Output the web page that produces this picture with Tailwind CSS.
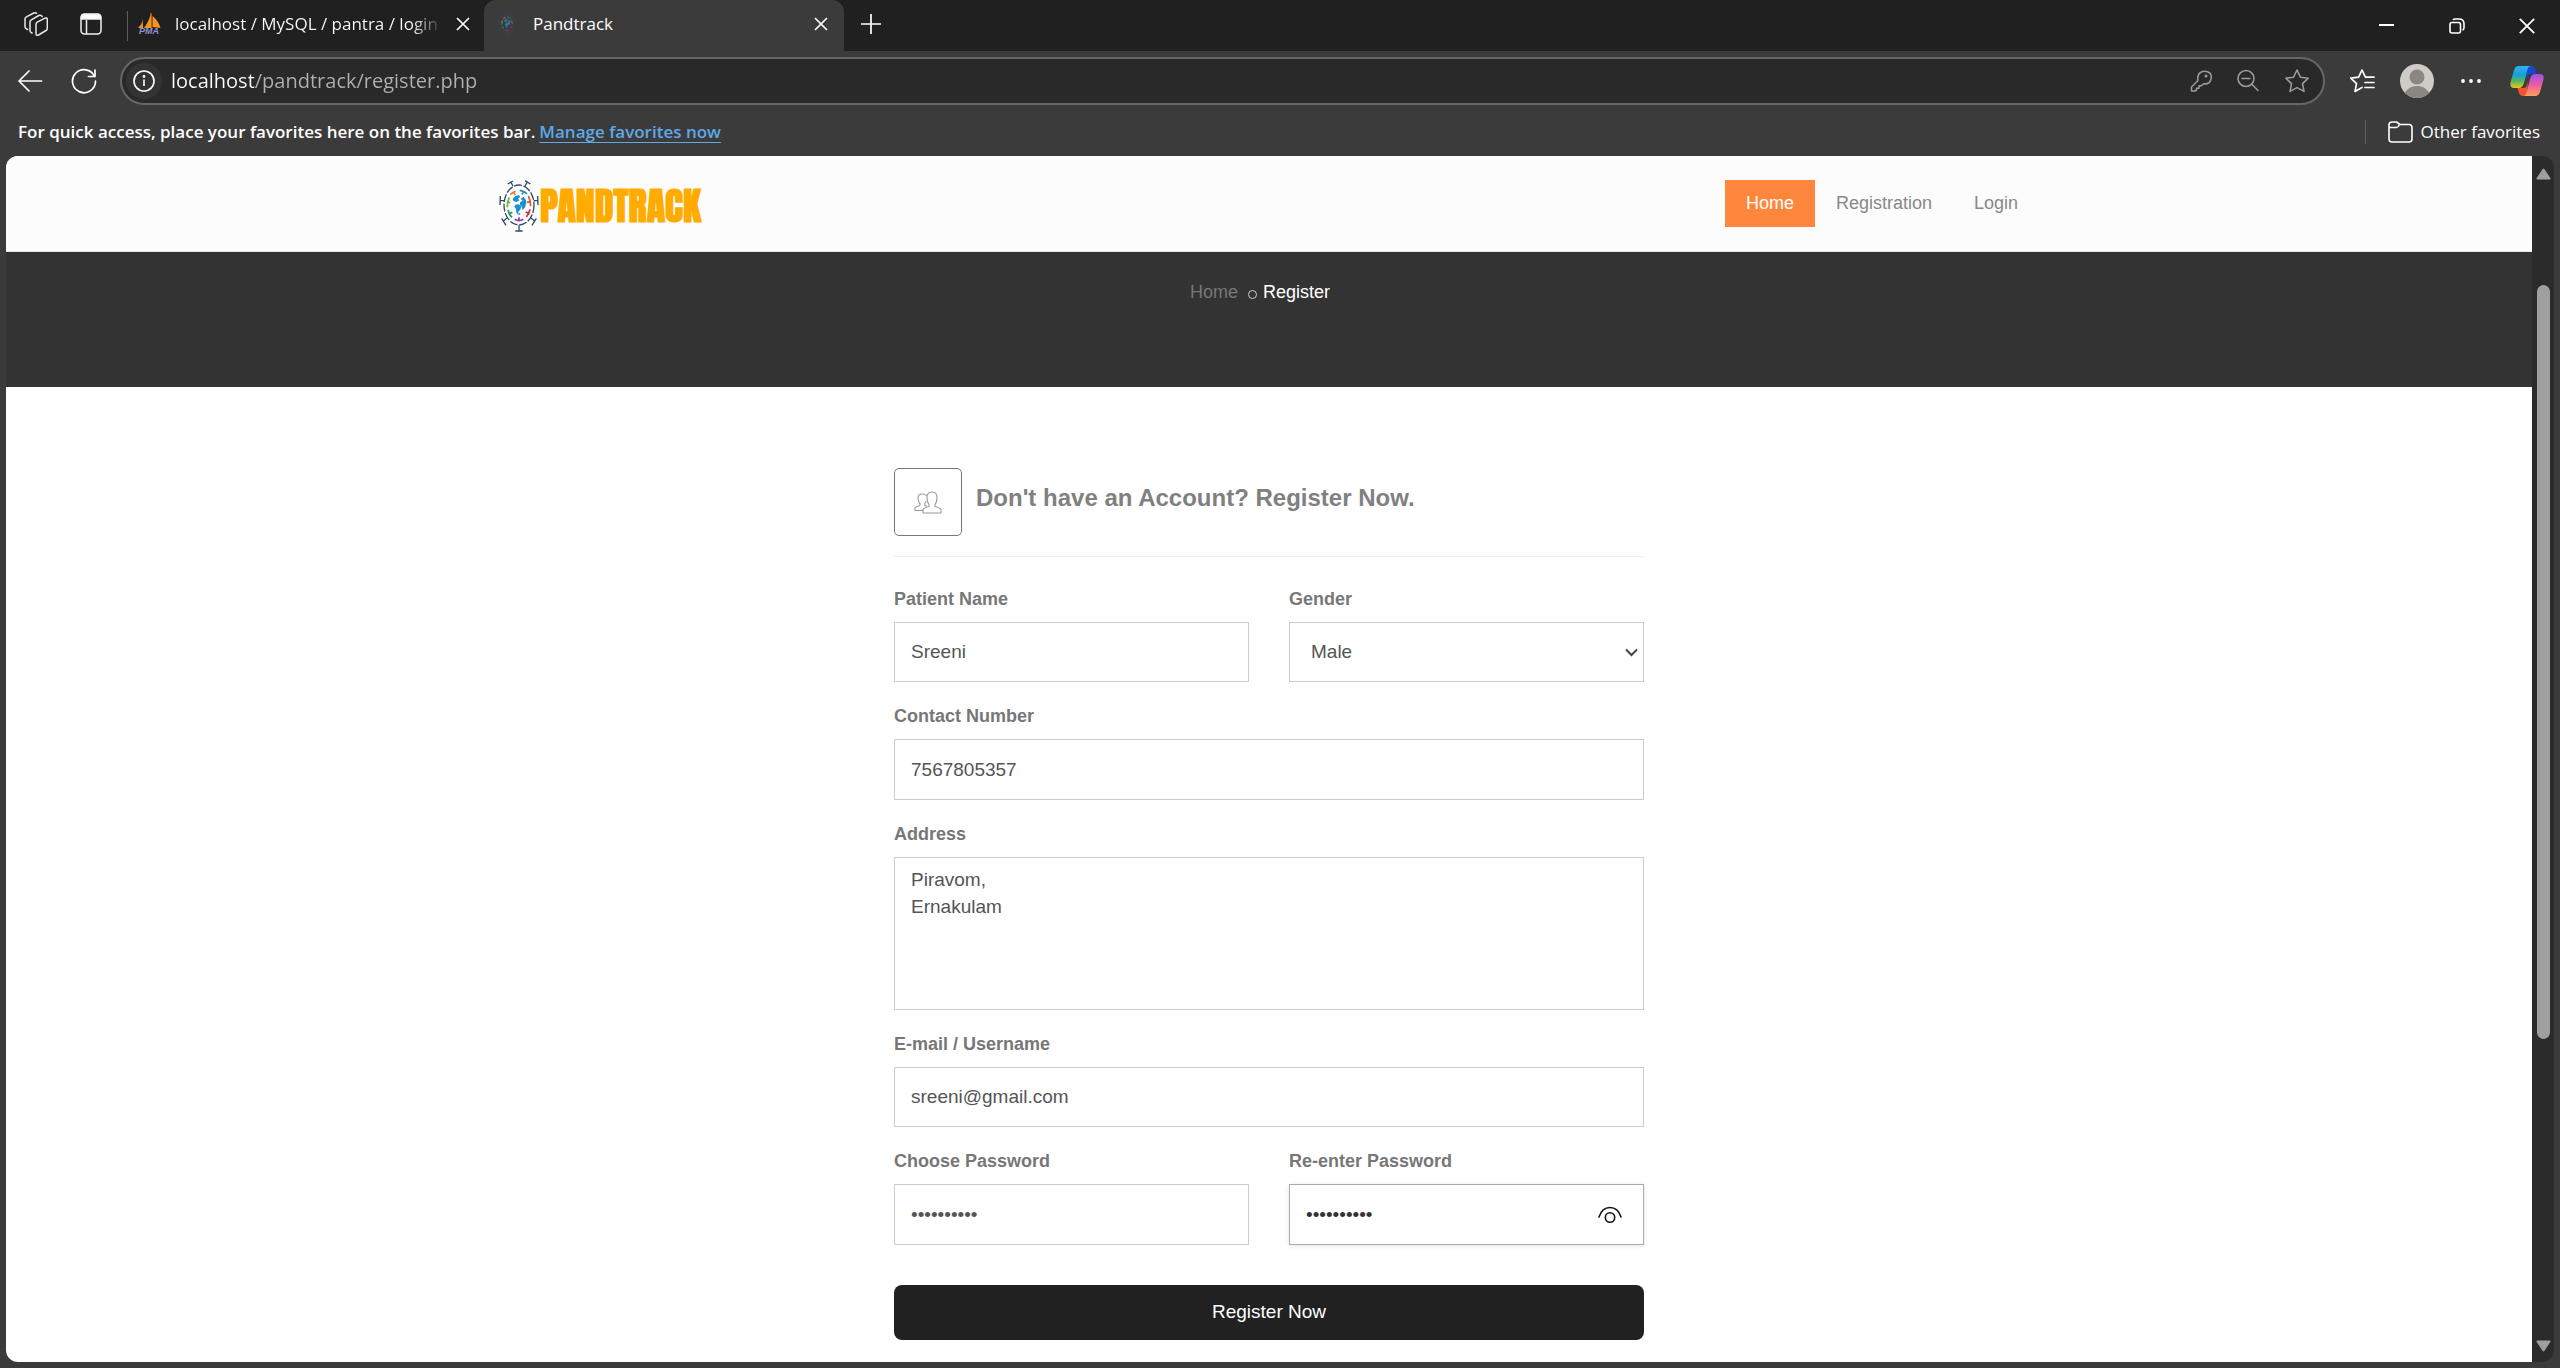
<!DOCTYPE html>
<html lang="en">
<head>
<meta charset="utf-8">
<meta name="viewport" content="width=device-width, initial-scale=1">
<title>Pandtrack</title>
<script src="https://cdn.jsdelivr.net/npm/@tailwindcss/browser@4"></script>
</head>
<body class="h-screen overflow-hidden flex flex-col bg-[#3b3b3b] text-white font-['Segoe_UI','Open_Sans',sans-serif]">

<!-- Shared virus emblem -->
<svg class="hidden">
  <symbol id="emblem" viewBox="57 90 120 156">
    <g fill="none" stroke="#334a66" stroke-width="4">
      <ellipse cx="117" cy="165" rx="45" ry="60" stroke-dasharray="24 5"/>
      <path d="M99 108l-6-11M83 102l16-9M135 108l6-11M135 92l16 10M73 152H61M61 138l-1 27M161 152h12M173 138l1 27M81 204l-10 8M65 205l13 21M153 204l10 8M169 205l-13 21M117 226v16M106 243h22"/>
    </g>
    <g fill="none" stroke-width="5">
      <path stroke="#e0813c" d="M91 134q7-8 16-10M101 128l4 7"/>
      <path stroke="#2d8bc4" d="M119 121q13 1 22 11M130 126l-4 8"/>
      <path stroke="#e8542c" d="M145 138q7 12 7 31M150 155l-9 2"/>
      <path stroke="#d0263c" d="M150 178q-3 15-11 23M146 190l-9-4"/>
      <path stroke="#8b3fa0" d="M104 208q13 8 26 0M117 211v-9"/>
      <path stroke="#1e9a62" d="M84 180q3 14 12 22M88 191l9-4"/>
      <path stroke="#6cb33f" d="M88 142q-6 12-6 30M83 156l8 2"/>
    </g>
    <path fill="#1a8fd1" d="M98 148q6-12 19-12l4 6-7 3 4 6-8 5-9-2zM106 164l9-1 9 6-3 10-5 4-2 8-5-3-1-12-5-6zM122 146l9-6q8 8 8 18l-4 14-7 9-3-12-6-5 2-9 7-2zM110 192l10-3 1 6z"/>
  </symbol>
</svg>

<!-- Tab strip -->
<header class="h-[51px] shrink-0 flex items-stretch bg-[#202020] text-[17px]">
  <div class="flex items-center shrink-0 pl-6 pr-[25px] gap-8 pb-[3px]">
    <button aria-label="Workspaces"><svg class="w-6 h-6" viewBox="0 0 24 24" fill="none" stroke="#e8e8e8" stroke-width="1.500" stroke-linejoin="round" stroke-linecap="round"><path d="M12 12.300q0-1.500 1.300-2.200l7.200-3.800q2.800-1.200 2.800 1.200v9q0 1.300-1.300 2L14.500 23q-2.500 1-2.500-1.500zM8 21l-1-.6q-1-.7-1-2V10q0-1.500 1.300-2.200l7.500-4.300q1.600-.7 2.600.2l.8.800M3.500 17.500l-1.300-.8q-1.200-.7-1.200-2V7q0-1.500 1.300-2.200l7.500-3.800q1.500-.6 2.700.3"/></svg></button>
    <button aria-label="Tab actions"><svg class="w-[22px] h-6" viewBox="0 0 22 24" fill="none" stroke="#f0f0f0" stroke-width="1.500"><rect x="1" y="2" width="20" height="20" rx="3.500"/><path d="M1.500 6V4.500Q1.500 2.500 4 2.500h14q2.500 0 2.500 2V7h-19z" fill="#fff"/><path d="M6.500 8v14"/></svg></button>
  </div>
  <div role="tablist" class="flex items-stretch">
    <div role="tab" aria-selected="false" class="flex items-center w-[357px] pb-[3px]">
      <span class="w-px h-[30px] mt-1 bg-[#5c5c5c]"></span>
      <svg class="w-6 h-6 ml-[9px] shrink-0" viewBox="0 0 24 24"><path fill="#f5941f" d="M5.500 4q1 7-4.500 12h5zM14 0q-1 8-7 16h8zM15.500 4q6 5 8 12l-8-1z"/><path stroke="#a85f12" fill="none" d="M14.500 1v15"/><text x="12" y="22" text-anchor="middle" font-family="Liberation Sans" font-weight="700" font-style="italic" font-size="9" fill="#8d93cc">PMA</text></svg>
      <span class="ml-[14px] w-[268px] overflow-hidden whitespace-nowrap bg-[linear-gradient(90deg,#fff_236px,#202020_268px)] bg-clip-text text-transparent">localhost / MySQL / pantra / login</span>
      <button aria-label="Close tab" class="ml-3"><svg class="w-4 h-4" viewBox="0 0 16 16" stroke="#fff" stroke-width="1.700"><path d="M2 2l12 12M14 2L2 14"/></svg></button>
    </div>
    <div role="tab" aria-selected="true" class="flex items-center w-[360px] rounded-t-xl bg-[#3b3b3b] pl-[11px] pr-[15px] pb-[3px]">
      <svg class="w-6 h-6 opacity-80"><use href="#emblem"/></svg>
      <span class="ml-[14px] flex-1">Pandtrack</span>
      <button aria-label="Close tab"><svg class="w-4 h-4" viewBox="0 0 16 16" stroke="#fff" stroke-width="1.700"><path d="M2 2l12 12M14 2L2 14"/></svg></button>
    </div>
  </div>
  <button aria-label="New tab" class="ml-4 mb-1"><svg class="w-[22px] h-[22px]" viewBox="0 0 22 22" stroke="#fff" stroke-width="1.700"><path d="M11 1v20M1 11h20"/></svg></button>
  <div class="ml-auto flex items-center gap-[54px] pr-[25px]">
    <button aria-label="Minimize"><svg class="w-4 h-4" viewBox="0 0 16 16"><path d="M0 6h15v2H0z" fill="#fff"/></svg></button>
    <button aria-label="Restore"><svg class="w-4 h-4" viewBox="0 0 16 16" fill="none" stroke="#fff" stroke-width="1.600"><rect x="1" y="4.500" width="10.500" height="10.500" rx="2"/><path d="M4 2Q4.500 1 6.500 1H10q5 0 5 5v3.500q0 2-1.500 2.500"/></svg></button>
    <button aria-label="Close window"><svg class="w-4 h-4" viewBox="0 0 16 16" stroke="#fff" stroke-width="1.800"><path d="M.8 .8l14.400 14.400M15.200 .8L.8 15.200"/></svg></button>
  </div>
</header>

<!-- Address bar -->
<div class="h-[59px] shrink-0 flex items-center pl-[17px] pr-4">
  <button aria-label="Back"><svg class="w-[26px] h-[26px]" viewBox="0 0 26 26" fill="none" stroke="#fff" stroke-width="1.700" stroke-linecap="round" stroke-linejoin="round"><path d="M24.500 13H2M12 3L2 13l10 10"/></svg></button>
  <button aria-label="Refresh" class="ml-7"><svg class="w-[26px] h-[26px]" viewBox="0 0 26 26" fill="none" stroke="#fff" stroke-width="1.700" stroke-linecap="round" stroke-linejoin="round"><path d="M23.500 8.500A11.500 11.500 0 1 0 24.500 13M24 2v6.500h-6.500"/></svg></button>
  <div class="ml-[23px] flex-1 h-12 flex items-center rounded-full border-2 border-[#666] bg-[#292929] pl-1 pr-[13px]">
    <button aria-label="Site information" class="w-9 h-9 flex items-center justify-center rounded-full bg-[#333]"><svg class="w-[22px] h-[22px]" viewBox="0 0 22 22" fill="none" stroke="#fff" stroke-width="1.600"><circle cx="11" cy="11" r="10"/><path d="M11 9.500V16"/><circle cx="11" cy="6.500" r=".6"/></svg></button>
    <input aria-label="Address" value="localhost/pandtrack/register.php" class="ml-[9px] flex-1 h-8 text-[20px] outline-none bg-[linear-gradient(90deg,#fff_83px,#b0b0b0_83px)] bg-clip-text text-transparent">
    <div class="flex items-center gap-6">
      <button aria-label="Saved passwords"><svg class="w-[22px] h-[22px]" viewBox="0 0 22 22" fill="none" stroke="#9a9a9a" stroke-width="1.500" stroke-linejoin="round"><path d="M8 10.500Q7 4.500 10.500 2.500t7.500-.5 3 7-7.500 4.800l-2 2H9v2.500H6.500v2L5 21H1.500v-4z"/><circle cx="16" cy="6" r=".8"/></svg></button>
      <button aria-label="Zoom out"><svg class="w-6 h-6" viewBox="0 0 24 24" fill="none" stroke="#9a9a9a" stroke-width="1.600" stroke-linecap="round"><circle cx="10" cy="9.500" r="8"/><path d="M6 9.500h8M15.800 15.200L22 21.500"/></svg></button>
      <button aria-label="Add to favorites"><svg class="w-[26px] h-[26px]" viewBox="0 0 26 26" fill="none" stroke="#9a9a9a" stroke-width="1.600" stroke-linejoin="round"><path d="M13 2l3.400 7.200 7.800 1-5.700 5.400 1.500 7.800-7-3.800-7 3.800 1.500-7.800L1.800 10.200l7.800-1z"/></svg></button>
    </div>
  </div>
  <div class="flex items-center ml-6">
    <button aria-label="Favorites"><svg class="w-[26px] h-[26px]" viewBox="0 0 26 26" fill="none" stroke="#fff" stroke-width="1.700" stroke-linejoin="round" stroke-linecap="round"><path d="M13 19.500l-7 3.900 1.500-7.800L1.800 10.200l7.800-1L13 2l3.400 7.200H25M16 14.500h9M16 19.500h9"/></svg></button>
    <button aria-label="Profile" class="ml-[25px]"><svg class="w-[34px] h-[34px]" viewBox="0 0 34 34"><defs><clipPath id="disc"><circle cx="17" cy="17" r="17"/></clipPath></defs><g clip-path="url(#disc)"><path fill="#cfccc8" d="M0 0h34v34H0z"/><circle cx="17" cy="13" r="7.500" fill="#8b8682"/><ellipse cx="17" cy="33" rx="13" ry="11" fill="#8b8682"/></g></svg></button>
    <button aria-label="Settings and more" class="ml-[26px]"><svg class="w-[22px] h-[6px]" viewBox="0 0 22 6" fill="#fff"><circle cx="3" cy="3" r="1.900"/><circle cx="11" cy="3" r="1.900"/><circle cx="19" cy="3" r="1.900"/></svg></button>
    <button aria-label="Copilot" class="ml-7"><svg class="w-[34px] h-[32px]" viewBox="0 0 34 32">
      <defs>
        <linearGradient id="c1" x1="0" y1="0" x2="0" y2="1"><stop offset="0" stop-color="#2fb4f4"/><stop offset=".4" stop-color="#169fd8"/><stop offset=".7" stop-color="#5cb85a"/><stop offset="1" stop-color="#f5c518"/></linearGradient>
        <linearGradient id="c2" x1="0" y1="0" x2="0" y2="1"><stop offset="0" stop-color="#a04ff0"/><stop offset=".5" stop-color="#ee5c9c"/><stop offset="1" stop-color="#ffa05a"/></linearGradient>
      </defs>
      <path fill="#1648d0" d="M17 1h4q3 0 4 3l1.500 5h-6q-2.500 0-3.500 3l-1 4z"/>
      <path fill="#f0552c" d="M17 31h-4q-3 0-4-3l-1.500-5h6q2.500 0 3.500-3l1-4z"/>
      <path fill="url(#c1)" d="M9 1h12q-2.500 0-3.500 3.500L14 18q-1.500 5-5 5H4q-4.500 0-3.500-5.500L4 5q1.300-4 5-4z"/>
      <path fill="url(#c2)" d="M25 31H13q2.500 0 3.500-3.500L20 14q1.500-5 5-5h5q4.500 0 3.500 5.500L30 27q-1.300 4-5 4z"/>
    </svg></button>
  </div>
</div>

<!-- Favorites bar -->
<div class="h-[46px] shrink-0 flex items-center pl-[18px] pr-5 pb-[2px] text-[17px]">
  <p class="font-semibold">For quick access, place your favorites here on the favorites bar.</p>
  <a href="#" class="ml-1 font-semibold text-[#5ea8e6] underline underline-offset-4">Manage favorites now</a>
  <div class="ml-auto flex items-center">
    <span class="w-px h-6 bg-[#606060]"></span>
    <button class="ml-[22px] flex items-center gap-2"><svg class="w-[25px] h-6" viewBox="0 0 25 24" fill="none" stroke="#fff" stroke-width="1.600" stroke-linejoin="round"><path d="M1 5q0-3 3-3h4.500L12 4.500h9q3 0 3 3V19q0 3-3 3H4q-3 0-3-3zM1.500 7.500h7q1.500 0 3-3"/></svg>Other favorites</button>
  </div>
</div>

<!-- Viewport -->
<div class="flex-1 min-h-0 flex mx-[6px] mb-[6px] rounded-xl overflow-hidden bg-[#2b2b2b]">
  <div class="flex-1 min-w-0 overflow-hidden bg-white text-[18px] font-[Arial,'Liberation_Sans',sans-serif] text-[#777]">
    <div class="bg-[#fcfcfc] border-b border-[#e7e7e7]">
      <div class="max-w-[1540px] mx-auto h-[95px] flex items-center justify-between">
        <a href="#" class="flex items-center gap-px mt-1">
          <svg class="w-10 h-[52px]"><use href="#emblem"/></svg>
          <span class="text-[#ffab00] text-[38px] leading-[40px] font-bold font-['Anton','Oswald','Roboto_Condensed','Liberation_Sans_Narrow','Open_Sans_Condensed',sans-serif]">PANDTRACK</span>
        </a>
        <nav class="flex text-[#888]">
          <a href="#" class="px-[21px] py-[10px] leading-[27px] bg-[#ff863d] text-white">Home</a>
          <a href="#" class="px-[21px] py-[10px] leading-[27px]">Registration</a>
          <a href="#" class="px-[21px] py-[10px] leading-[27px]">Login</a>
        </nav>
      </div>
    </div>
    <div class="h-[135px] bg-[#333] pt-[27px] flex justify-center">
      <ol class="flex h-[27px] leading-[27px] pr-[18px]">
        <li><a href="#" class="text-[#777]">Home</a></li>
        <li class="flex items-center text-white"><span class="w-[9px] h-[9px] mt-1 ml-[10px] mr-[6px] rounded-full border border-[#ccc]"></span>Register</li>
      </ol>
    </div>

    <form class="max-w-[750px] mx-auto pt-[81px]">
      <div class="flex gap-[14px] pb-5 border-b border-[#eee] mb-[29px]">
        <span class="w-[68px] h-[68px] flex items-center justify-center rounded-[5px] border border-[#777]">
          <svg class="w-7 h-[23px]" viewBox="0 0 28 23" fill="none" stroke="#999" stroke-width="1.100" stroke-linejoin="round"><path d="M9 22v-3.500q1-1.800 6-3v-2q-2-2.500-2-7Q13 1 18 1t5 5.500q0 4.500-2 7v2q5 1.200 6 3V22zM8.500 19.500H1V17q1-1.500 5-2.500v-2q-2-2-2-5.500Q4 3 8.500 3q2.500 0 4 1.500M12 10q-.3 1.500-1.200 2.500v2l2 .6"/></svg>
        </span>
        <h3 class="mt-[13px] text-[24px] leading-[33px] font-bold text-[#808080]">Don't have an Account? Register Now.</h3>
      </div>

      <div class="grid grid-cols-2 gap-x-10 gap-y-[21px] text-[#555]">
        <div class="flex flex-col gap-[9px]">
          <label for="name" class="font-bold leading-[27px] text-[#777]">Patient Name</label>
          <input id="name" type="text" value="Sreeni" class="h-[60px] px-4 border border-[#ccc] text-[19px]">
        </div>
        <div class="flex flex-col gap-[9px]">
          <label for="gender" class="font-bold leading-[27px] text-[#777]">Gender</label>
          <div class="relative flex">
            <select id="gender" class="flex-1 h-[60px] px-[21px] border border-[#ccc] text-[19px] appearance-none"><option>Male</option><option>Female</option></select>
            <svg class="absolute right-[6px] top-[26px] w-[13px] h-[9px] pointer-events-none" viewBox="0 0 13 9" fill="none" stroke="#444" stroke-width="2"><path d="M1 1.500l5.500 5.500L12 1.500"/></svg>
          </div>
        </div>
        <div class="col-span-2 flex flex-col gap-[9px]">
          <label for="phone" class="font-bold leading-[27px] text-[#777]">Contact Number</label>
          <input id="phone" type="text" value="7567805357" class="h-[61px] px-4 border border-[#ccc] text-[19px]">
        </div>
        <div class="col-span-2 flex flex-col gap-[9px]">
          <label for="address" class="font-bold leading-[27px] text-[#777]">Address</label>
          <textarea id="address" class="h-[153px] px-4 py-2 border border-[#ccc] text-[19px] leading-[27px] resize-none">Piravom,
Ernakulam</textarea>
        </div>
        <div class="col-span-2 flex flex-col gap-[9px]">
          <label for="email" class="font-bold leading-[27px] text-[#777]">E-mail / Username</label>
          <input id="email" type="text" value="sreeni@gmail.com" class="h-[60px] px-4 border border-[#ccc] text-[19px]">
        </div>
        <div class="flex flex-col gap-[9px]">
          <label for="pass" class="font-bold leading-[27px] text-[#777]">Choose Password</label>
          <input id="pass" type="password" value="password12" class="h-[61px] px-4 border border-[#ccc] text-[19px]">
        </div>
        <div class="flex flex-col gap-[9px]">
          <label for="pass2" class="font-bold leading-[27px] text-[#777]">Re-enter Password</label>
          <div class="relative flex">
            <input id="pass2" type="password" value="password12" class="flex-1 h-[61px] px-4 border border-[#aaa] text-[19px] text-[#333] shadow-[0_1px_5px_rgba(0,0,0,0.1)]">
            <button type="button" aria-label="Show password" class="absolute right-[22px] top-[22px]"><svg class="w-6 h-[18px]" viewBox="0 0 24 18" fill="none" stroke="#111" stroke-width="1.600" stroke-linecap="round"><path d="M1 11Q4 1.500 12 1.500T23 11"/><circle cx="12" cy="11.500" r="4.700"/></svg></button>
          </div>
        </div>
      </div>
      <button type="submit" class="mt-10 w-full h-[55px] rounded-lg bg-[#212121] text-white text-[19px]">Register Now</button>
    </form>
  </div>

  <!-- Scrollbar -->
  <div class="w-[22px] shrink-0 flex flex-col items-center pt-3 pb-[10px]">
    <svg class="w-[15px] h-3 shrink-0" viewBox="0 0 15 12"><path d="M7.500 1.500L13.500 10.500h-12z" fill="#9f9f9f" stroke="#9f9f9f" stroke-width="2" stroke-linejoin="round"/></svg>
    <div class="flex-1 flex flex-col w-[13px]">
      <span class="basis-[105px] shrink-0"></span>
      <span class="h-[65%] rounded-full bg-[#9f9f9f]"></span>
    </div>
    <svg class="w-[15px] h-3 shrink-0" viewBox="0 0 15 12"><path d="M7.500 10.500L13.500 1.500h-12z" fill="#9f9f9f" stroke="#9f9f9f" stroke-width="2" stroke-linejoin="round"/></svg>
  </div>
</div>
</body>
</html>
